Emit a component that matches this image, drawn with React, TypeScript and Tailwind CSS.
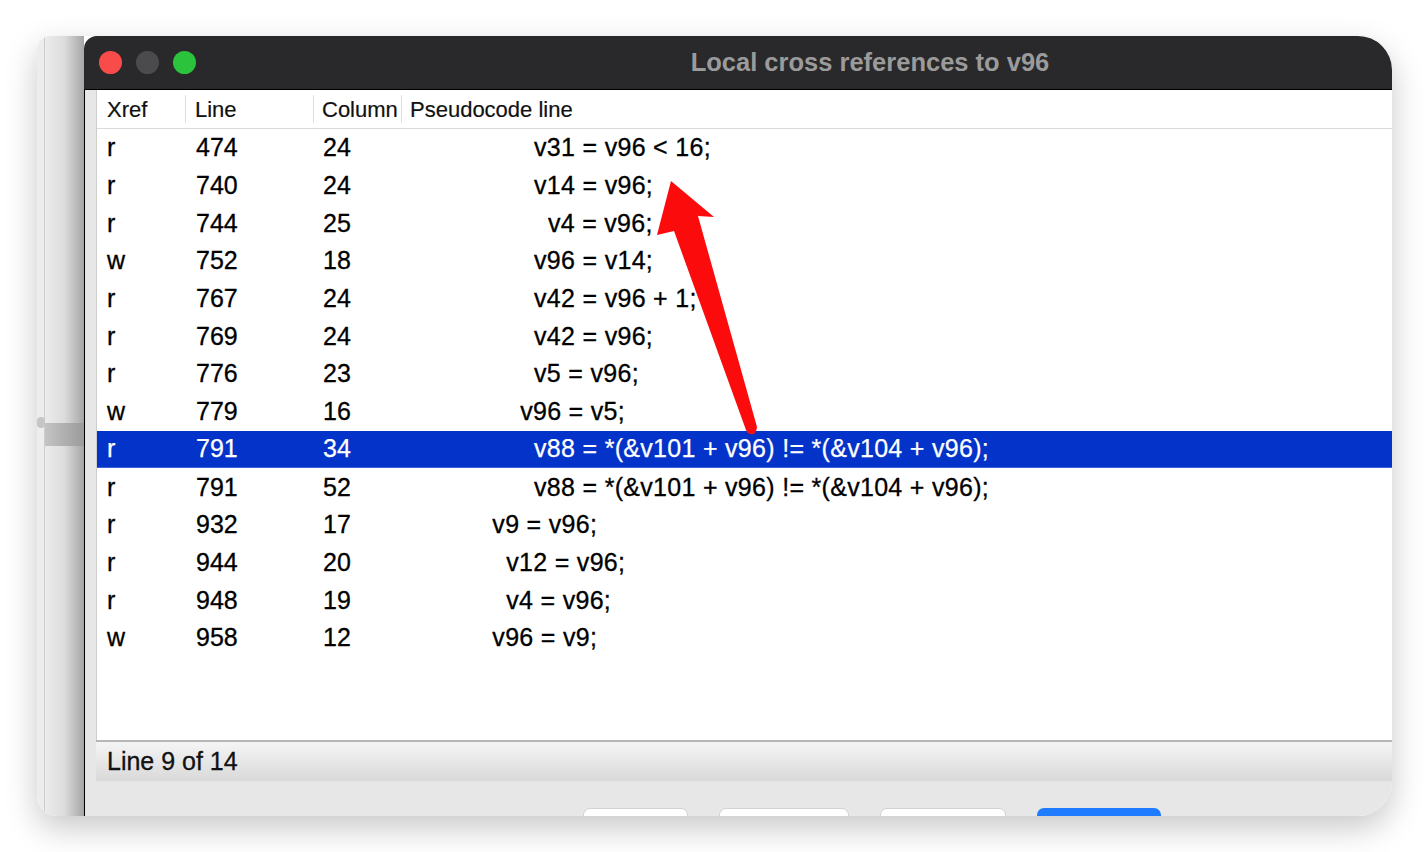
import React from "react";

type Xref = { kind: string; line: string; col: string; indent: number; code: string };

const xrefs: Xref[] = [
  { kind: "r", line: "474", col: "24", indent: 18, code: "v31 = v96 < 16;" },
  { kind: "r", line: "740", col: "24", indent: 18, code: "v14 = v96;" },
  { kind: "r", line: "744", col: "25", indent: 20, code: "v4 = v96;" },
  { kind: "w", line: "752", col: "18", indent: 18, code: "v96 = v14;" },
  { kind: "r", line: "767", col: "24", indent: 18, code: "v42 = v96 + 1;" },
  { kind: "r", line: "769", col: "24", indent: 18, code: "v42 = v96;" },
  { kind: "r", line: "776", col: "23", indent: 18, code: "v5 = v96;" },
  { kind: "w", line: "779", col: "16", indent: 16, code: "v96 = v5;" },
  { kind: "r", line: "791", col: "34", indent: 18, code: "v88 = *(&v101 + v96) != *(&v104 + v96);" },
  { kind: "r", line: "791", col: "52", indent: 18, code: "v88 = *(&v101 + v96) != *(&v104 + v96);" },
  { kind: "r", line: "932", col: "17", indent: 12, code: "v9 = v96;" },
  { kind: "r", line: "944", col: "20", indent: 14, code: "v12 = v96;" },
  { kind: "r", line: "948", col: "19", indent: 14, code: "v4 = v96;" },
  { kind: "w", line: "958", col: "12", indent: 12, code: "v96 = v9;" },
];

const selected = 8;

function TitleBar() {
  return (
    <div className="grid h-[54px] shrink-0 grid-cols-[1fr_auto_1fr] items-center border-b border-black bg-[#29292b]">
      <div className="flex items-center gap-[14px] pl-[15px]">
        <span className="h-[23px] w-[23px] rounded-full bg-[#fa4b4b]" />
        <span className="h-[23px] w-[23px] rounded-full bg-[#4b4b4d]" />
        <span className="h-[23px] w-[23px] rounded-full bg-[#2bc33b]" />
      </div>
      <div className="text-[25.5px] font-bold leading-none text-[#9b9b9b]">Local cross references to v96</div>
      <div />
    </div>
  );
}

function XrefTable() {
  return (
    <div className="flex-1 overflow-hidden border-l border-[#cdcdcd] bg-white text-black">
      <div className="grid h-[39px] grid-cols-[88px_128px_88px_1fr] items-center border-b border-[#dadada] text-[22px] text-[#111] [-webkit-text-stroke:0.2px_#111]">
        <div className="flex h-[28px] items-center pl-[10px]">Xref</div>
        <div className="flex h-[28px] items-center border-l border-[#dedede] pl-[9px]">Line</div>
        <div className="flex h-[28px] items-center border-l border-[#dedede] pl-[8px]">Column</div>
        <div className="flex h-[28px] items-center border-l border-[#dedede] pl-[8px]">Pseudocode line</div>
      </div>
      {xrefs.map((x, i) => (
        <div
          key={i}
          className={
            i === selected
              ? "grid h-[37.7px] grid-cols-[88px_128px_88px_1fr] items-center border-b border-[#3b63d6] bg-[#0433c9] text-[25px] leading-none text-white [-webkit-text-stroke:0.25px_white]"
              : "grid h-[37.7px] grid-cols-[88px_128px_88px_1fr] items-center text-[25px] leading-none [-webkit-text-stroke:0.3px_black]"
          }
        >
          <div className="pl-[10px]">{x.kind}</div>
          <div className="pl-[11px]">{x.line}</div>
          <div className="pl-[10px]">{x.col}</div>
          <div className="whitespace-pre pl-[8px]">
            {" ".repeat(x.indent)}
            <span className="tracking-[0.3px]">{x.code}</span>
          </div>
        </div>
      ))}
    </div>
  );
}

function SideWindow() {
  return (
    <div className="flex w-[47px] shrink-0">
      <div className="flex w-[8px] flex-col border-r border-[#cdcdcd] bg-[#ededed]">
        <div className="mt-[381px] h-[11px] w-[8px] rounded-full bg-[#c6c6c6]" />
      </div>
      <div className="flex flex-1 flex-col bg-gradient-to-r from-[#ececec] via-[#dcdcdc] to-[#a6a6a6]">
        <div className="mt-[387px] h-[23px] bg-gradient-to-r from-[#c4c4c4] to-[#9b9b9b]" />
      </div>
    </div>
  );
}

export default function App() {
  return (
    <div className="relative h-[852px] w-[1428px] overflow-hidden bg-white pl-[37px] pt-[36px] font-['Liberation_Sans',Arial,sans-serif]">
      <div className="flex h-[780px] w-[1355px] overflow-hidden rounded-bl-[20px] rounded-br-[34px] rounded-tl-[14px] rounded-tr-[34px] shadow-[0_12px_32px_rgba(0,0,0,0.22)]">
        <SideWindow />
        <div className="flex w-[1572px] shrink-0 flex-col overflow-hidden rounded-tl-[13px] bg-[#e7e7e7]">
          <TitleBar />
          <div className="flex flex-1 flex-col border-l border-black pl-[11px]">
            <XrefTable />
            <div className="flex h-[41px] shrink-0 items-center border-t-2 border-[#b6b6b6] bg-gradient-to-b from-[#f5f5f5] to-[#d9d9d9] pl-[11px] text-[25px] leading-none text-[#111] [-webkit-text-stroke:0.3px_#111]">
              Line 9 of 14
            </div>
            <div className="flex h-[35px] shrink-0 gap-[31px] pl-[487px] pt-[27px]">
              <button className="h-[30px] w-[105px] rounded-[7px] border border-[#d2d2d2] bg-white" />
              <button className="h-[30px] w-[130px] rounded-[7px] border border-[#d2d2d2] bg-white" />
              <button className="h-[30px] w-[126px] rounded-[7px] border border-[#d2d2d2] bg-white" />
              <button className="h-[30px] w-[124px] rounded-[7px] bg-[#1f7bff]" />
            </div>
          </div>
        </div>
      </div>
      <svg className="pointer-events-none absolute left-0 top-0" width="1428" height="852" viewBox="0 0 1428 852">
        <path
          d="M671 181 L714 217 L698 216 L757 427 Q756 436 750 434 Q747 433 746 430 L674 231 L657 235 Z"
          fill="#fb0b0b"
        />
      </svg>
    </div>
  );
}
